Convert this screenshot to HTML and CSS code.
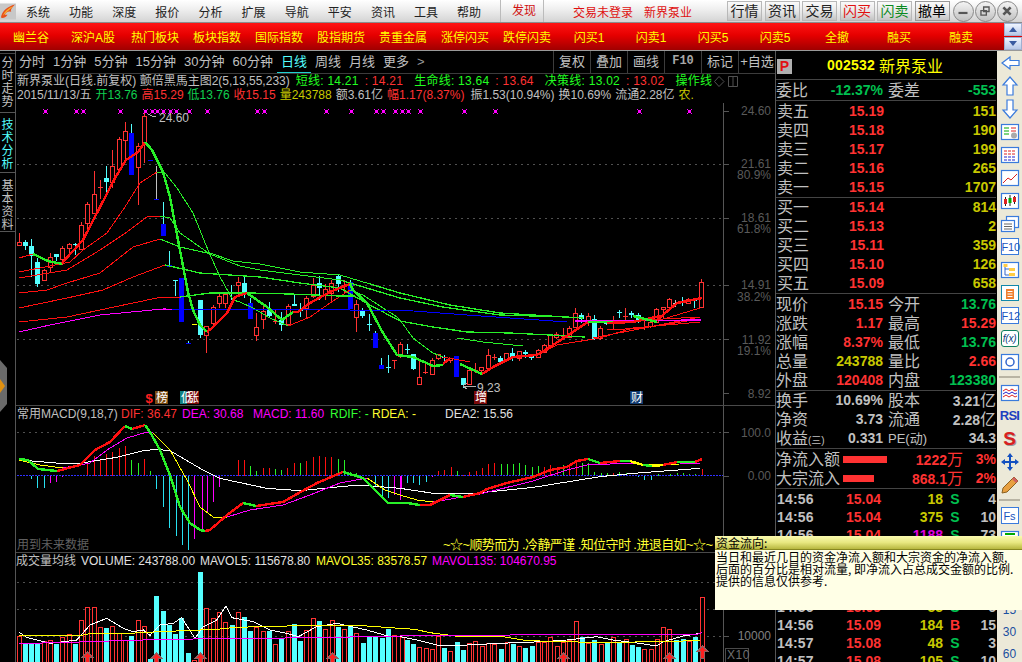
FILE: index.html
```html
<!DOCTYPE html>
<html lang="zh">
<head>
<meta charset="utf-8">
<title>新界泵业 日线</title>
<link rel="stylesheet" href="styles.css">
</head>
<body>
<div class="app">
  <header class="menubar">
    <svg class="logo" viewBox="0 0 17 17"><rect width="17" height="17" fill="#c8c8c8"/><path d="M1 15 C2 8 8 3 16 1 C12 5 11 7 12 9 C9 8 7 9 5 12 L8 12 C6 15 3 16 1 15Z" fill="#e8501a"/><path d="M3 13 C5 8 9 5 14 3 C10 7 7 9 3 13Z" fill="#f8b030"/></svg>
    <nav class="menu">
      <span>系统</span><span>功能</span><span>深度</span><span>报价</span><span>分析</span><span>扩展</span><span>导航</span><span>平安</span><span>资讯</span><span>工具</span><span>帮助</span>
    </nav>
    <span class="menu-find">发现</span>
    <span class="login">交易未登录</span>
    <span class="login name">新界泵业</span>
    <div class="quick">
      <span class="qbtn">行情</span><span class="qbtn">资讯</span><span class="qbtn">交易</span><span class="qbtn buy">闪买</span><span class="qbtn sell">闪卖</span><span class="qbtn cancel">撤单</span>
    </div>
    <div class="winctl">
      <span class="wbtn"><svg viewBox="0 0 20 20"><rect x="5" y="11" width="10" height="2.4" fill="#555"/></svg></span>
      <span class="wbtn"><svg viewBox="0 0 20 20"><path d="M8.500 5.500h6v5h-6zM5.500 9.500h6v5h-6z" fill="none" stroke="#555" stroke-width="1.500"/></svg></span>
      <span class="wbtn"><svg viewBox="0 0 20 20"><path d="M6 6l8 8M14 6l-8 8" stroke="#555" stroke-width="3"/></svg></span>
    </div>
  </header>

  <div class="redbar">
    <span>幽兰谷</span><span>深沪A股</span><span>热门板块</span><span>板块指数</span><span>国际指数</span><span>股指期货</span><span>贵重金属</span><span>涨停闪买</span><span>跌停闪卖</span><span>闪买1</span><span>闪卖1</span><span>闪买5</span><span>闪卖5</span><span>全撤</span><span>融买</span><span>融卖</span>
    <div class="scroll">
      <i class="up"></i><i class="down"></i>
    </div>
  </div>

  <div class="main">
    <aside class="sidetabs">
      <div class="stab first">分时走势</div>
      <div class="stab active">技术分析</div>
      <div class="stab last">基本资料</div>
    </aside>
    <svg class="handle" viewBox="0 0 8 52"><path d="M0 0L7 8V44L0 52Z" fill="#6a6a6a"/><path d="M0 19L5 26L0 33Z" fill="#e09010"/></svg>

    <section class="center">
      <div class="tabbar">
        <div class="periods">
          <span>分时</span><span>1分钟</span><span>5分钟</span><span>15分钟</span><span>30分钟</span><span>60分钟</span><span class="on">日线</span><span>周线</span><span>月线</span><span>更多</span><span class="more">&gt;</span>
        </div>
        <div class="tools-right">
          <span>复权</span><span>叠加</span><span>画线</span><span class="f10">F10</span><span>标记</span><span>+自选</span>
        </div>
      </div>
      <div class="info">
        <div class="line">
          <span class="g0">新界泵业(日线.前复权) 颤倍黑馬主图2(5,13,55,233)</span>
          <span class="lime m1">短线: 14.21</span><span class="red m2">: 14.21</span>
          <span class="lime m3">生命线: 13.64</span><span class="red m2">: 13.64</span>
          <span class="lime m3">决策线: 13.02</span><span class="red m2">: 13.02</span>
          <span class="lime m3">操作线</span>
          <svg class="mini" viewBox="0 0 26 11"><path d="M5 .5L10 5.500L5 10.500L.5 5.500Z M14.500 .5h9v10h-9zM19 .5v10" fill="none" stroke="#505050"/></svg>
        </div>
        <div class="line second">
          <span class="g0">2015/11/13/五</span>
          <span class="lime2">开13.76</span>
          <span class="red">高15.29</span>
          <span class="lime2">低13.76</span>
          <span class="red">收15.15</span>
          <span class="olive">量243788</span>
          <span class="g0">额3.61亿</span>
          <span class="red">幅1.17(8.37%)</span>
          <span class="g0 shift">振1.53(10.94%)</span>
          <span class="g0">换10.69%</span>
          <span class="g0">流通2.28亿</span>
          <span class="olive">农.</span>
        </div>
      </div>
      <svg class="chart" id="chart" viewBox="16 103 760 559" width="760" height="559">
        <g id="plot"></g>
        <text x="159" y="122" class="ct light">24.60</text>
        <text x="477" y="392" class="ct light">9.23</text>
        <g class="axis">
          <text x="771" y="115">24.60</text>
          <text x="771" y="168">21.61</text>
          <text x="771" y="179">80.9%</text>
          <text x="771" y="222">18.61</text>
          <text x="771" y="233">61.8%</text>
          <text x="771" y="289">14.91</text>
          <text x="771" y="301">38.2%</text>
          <text x="771" y="344">11.92</text>
          <text x="771" y="355">19.1%</text>
          <text x="771" y="398">8.92</text>
          <text x="771" y="437">100.0</text>
          <text x="771" y="480">0.00</text>
          <text x="771" y="640" class="brighter">10000</text>
        </g>
        <text x="727" y="659" class="xten">X10</text>
        <text x="149" y="403" class="badge-s">$</text>
        <text x="156" y="402" class="badge">榜</text>
        <text x="181" y="402" class="badge">低</text>
        <text x="187" y="402" class="badge">涨</text>
        <text x="475" y="402" class="badge">增</text>
        <text x="631" y="402" class="badge">财</text>
        <text x="17" y="418" class="ct light">常用MACD(9,18,7)</text>
        <text x="121" y="418" class="ct c-red">DIF: 36.47</text>
        <text x="182" y="418" class="ct c-mag">DEA: 30.68</text>
        <text x="253" y="418" class="ct c-mag">MACD: 11.60</text>
        <text x="330" y="418" class="ct c-green">RDIF: -</text>
        <text x="372" y="418" class="ct c-yellow">RDEA: -</text>
        <text x="445" y="418" class="ct c-white">DEA2: 15.56</text>
        <text x="17" y="549" class="ct dim">用到未来数据</text>
        <text x="443" y="549" class="ct c-yellow banner" textLength="270" lengthAdjust="spacing">~☆~顺势而为 .冷静严谨 .知位守时 .进退自如~☆~</text>
        <text x="16" y="565" class="ct light">成交量均线</text>
        <text x="81" y="565" class="ct c-white">VOLUME: 243788.00</text>
        <text x="200" y="565" class="ct c-white">MAVOL5: 115678.80</text>
        <text x="316" y="565" class="ct c-yellow">MAVOL35: 83578.57</text>
        <text x="432" y="565" class="ct c-mag">MAVOL135: 104670.95</text>
      </svg>
    </section>

    <section class="quote">
      <div class="q-head"><span class="pbadge">P</span><b class="code">002532</b><span class="qname">新界泵业</span></div>
      <div class="q-sec ratio">
        <div class="kv"><span>委比</span><b class="up-g">-12.37%</b><span>委差</span><b class="up-g">-553</b></div>
      </div>
      <div class="q-sec">
        <div class="book"><span>卖五</span><b class="r">15.19</b><b class="y">151</b></div>
        <div class="book"><span>卖四</span><b class="r">15.18</b><b class="y">190</b></div>
        <div class="book"><span>卖三</span><b class="r">15.17</b><b class="y">199</b></div>
        <div class="book"><span>卖二</span><b class="r">15.16</b><b class="y">265</b></div>
        <div class="book"><span>卖一</span><b class="r">15.15</b><b class="y">1707</b></div>
      </div>
      <div class="q-sec">
        <div class="book"><span>买一</span><b class="r">15.14</b><b class="y">814</b></div>
        <div class="book"><span>买二</span><b class="r">15.13</b><b class="y">2</b></div>
        <div class="book"><span>买三</span><b class="r">15.11</b><b class="y">359</b></div>
        <div class="book"><span>买四</span><b class="r">15.10</b><b class="y">126</b></div>
        <div class="book"><span>买五</span><b class="r">15.09</b><b class="y">658</b></div>
      </div>
      <div class="q-sec">
        <div class="kv"><span>现价</span><b class="r">15.15</b><span>今开</span><b class="up-g">13.76</b></div>
        <div class="kv"><span>涨跌</span><b class="r">1.17</b><span>最高</span><b class="r">15.29</b></div>
        <div class="kv"><span>涨幅</span><b class="r">8.37%</b><span>最低</span><b class="up-g">13.76</b></div>
        <div class="kv"><span>总量</span><b class="y">243788</b><span>量比</span><b class="r">2.66</b></div>
        <div class="kv"><span>外盘</span><b class="r">120408</b><span>内盘</span><b class="up-g">123380</b></div>
      </div>
      <div class="q-sec">
        <div class="kv"><span>换手</span><b class="w">10.69%</b><span>股本</span><b class="w">3.21<em>亿</em></b></div>
        <div class="kv"><span>净资</span><b class="w">3.73</b><span>流通</span><b class="w">2.28<em>亿</em></b></div>
        <div class="kv"><span class="over">收益<small class="tiny">(三)</small></span><b class="w">0.331</b><span class="pe">PE(动)</span><b class="w">34.3</b></div>
      </div>
      <div class="q-sec">
        <div class="flow"><span>净流入额</span><i class="fbar wide"></i><b class="r">1222<em>万</em></b><b class="r">3%</b></div>
        <div class="flow"><span>大宗流入</span><i class="fbar narrow"></i><b class="r">868.1<em>万</em></b><b class="r">2%</b></div>
      </div>
      <div class="q-sec trades">
        <div class="tr"><b class="w">14:56</b><b class="r">15.04</b><b class="y">18</b><b class="up-g">S</b><b class="w">4</b></div>
        <div class="tr"><b class="w">14:56</b><b class="r">15.04</b><b class="y">375</b><b class="up-g">S</b><b class="w">10</b></div>
        <div class="tr"><b class="w">14:56</b><b class="r">15.04</b><b class="m">1188</b><b class="up-g">S</b><b class="w">73</b></div>
        <div class="tr"></div>
        <div class="tr"></div>
        <div class="tr"></div>
        <div class="tr"><b class="w">14:56</b><b class="r">15.09</b><b class="y">55</b><b class="up-g">S</b><b class="w">6</b></div>
        <div class="tr"><b class="w">14:56</b><b class="r">15.09</b><b class="y">184</b><b class="r">B</b><b class="w">15</b></div>
        <div class="tr"><b class="w">14:57</b><b class="r">15.08</b><b class="y">48</b><b class="up-g">S</b><b class="w">3</b></div>
        <div class="tr"><b class="w">14:57</b><b class="r">15.08</b><b class="y">105</b><b class="up-g">S</b><b class="w">10</b></div>
      </div>
    </section>

    <aside class="toolcol">
      <svg class="ic" viewBox="0 0 20 20"><path d="M2 10L10 4V7.500H19V12.500H10V16Z" class="o"/></svg>
      <svg class="ic" viewBox="0 0 20 20"><path d="M10 1L17 9H13V19H7V9H3Z" class="o"/></svg>
      <svg class="ic" viewBox="0 0 20 20"><path d="M10 19L3 11H7V1H13V11H17Z" class="o"/></svg>
      <svg class="ic" viewBox="0 0 20 20"><rect x="1.500" y="2.500" width="17" height="15" class="o"/><path d="M4 6h5M4 9h5M4 12h5" stroke="#0a0"/><path d="M11 6h5M11 9h5" stroke="#d22"/><circle cx="14" cy="13.500" r="3" fill="#aaa"/></svg>
      <svg class="ic" viewBox="0 0 20 20"><rect x="1.500" y="2.500" width="17" height="15" class="o"/><path d="M4 6h12M4 9h12" stroke="#d22" stroke-dasharray="3 1"/><path d="M4 12h12M4 15h12" stroke="#22c" stroke-dasharray="3 1"/></svg>
      <svg class="ic" viewBox="0 0 20 20"><rect x="1.500" y="2.500" width="17" height="15" class="o"/><path d="M3 15L8 10L11 12L17 6" fill="none" stroke="#d22"/></svg>
      <svg class="ic" viewBox="0 0 20 20"><rect x="1.500" y="2.500" width="17" height="15" class="o"/><path d="M5.500 6v9M10 4v11M14.500 5v8" stroke="#222"/><rect x="4" y="8" width="3" height="5" fill="#d22"/><rect x="8.500" y="7" width="3" height="5" fill="#0a0"/><rect x="13" y="6" width="3" height="5" fill="#d22"/></svg>
      <svg class="ic" viewBox="0 0 20 20"><rect x="6.500" y="2.500" width="12" height="11" class="o"/><rect x="1.500" y="6.500" width="13" height="11" class="o"/><path d="M4 10h8M4 12.500h8M4 15h8" stroke="#666"/></svg>
      <span class="boxt">F10</span>
      <svg class="ic" viewBox="0 0 20 20"><rect x="1.500" y="2.500" width="17" height="15" class="o"/><path d="M5 5v10h4M5 9h4" fill="none" stroke="#36c"/><rect x="3.500" y="4" width="4" height="3" fill="#fc4"/><rect x="9" y="8" width="6" height="3" fill="#fc4"/><rect x="9" y="13" width="6" height="3" fill="#fc4"/></svg>
      <svg class="ic" viewBox="0 0 20 20"><rect x="1.500" y="2.500" width="17" height="15" fill="#fff" stroke="#18a"/><path d="M6 6h8v10H6z" fill="#f08030"/><path d="M7.500 8.500h5M7.500 11h5M7.500 13.500h5M10 4v2" stroke="#fff"/></svg>
      <span class="boxt">F12</span>
      <span class="boxt teal">f(x)</span>
      <svg class="ic" viewBox="0 0 20 20"><rect x="1.500" y="2.500" width="17" height="15" class="o"/><circle cx="10" cy="10" r="4" fill="none" stroke="#36c" stroke-width="1.500"/></svg>
      <hr class="sep">
      <svg class="ic" viewBox="0 0 20 20"><rect x="1.500" y="2.500" width="17" height="15" class="o"/><path d="M3 8l3-2 3 2 3-2 3 2 2-1" fill="none" stroke="#d22"/><path d="M3 11l3-2 3 2 3-2 3 2 2-1" fill="none" stroke="#22c"/><path d="M3 14l3-2 3 2 3-2 3 2 2-1" fill="none" stroke="#d22"/></svg>
      <span class="rsi">RSI</span>
      <span class="sic">S</span>
      <svg class="ic" viewBox="0 0 20 20"><path d="M10 1l3 4h-2v4h4V7l4 3-4 3v-2h-4v4h2l-3 4-3-4h2v-4H5v2l-4-3 4-3v2h4V5H7Z" fill="#1450c0"/></svg>
      <svg class="ic" viewBox="0 0 20 20"><path d="M14 2l4 4L7 17l-5 1 1-5Z" fill="#e8a040" stroke="#8a6020"/><path d="M14 2l4 4-2 2-4-4Z" fill="#d06060"/></svg>
      <hr class="sep">
      <span class="boxt narrow-t">Fs</span>
      <svg class="ic" viewBox="0 0 20 20"><rect x="1.500" y="2.500" width="17" height="15" class="o"/><path d="M5 5h10" stroke="#0a0" stroke-width="2"/></svg>
      <div class="nums"><span>15</span><span>30</span><span>60</span></div>
    </aside>

    <div class="tip">
      <div class="tip-h">资金流向:</div>
      <div class="tip-b">当日和最近几日的资金净流入额和大宗资金的净流入额,<br>后面的百分比是相对流量, 即净流入占总成交金额的比例.<br>提供的信息仅供参考.</div>
    </div>
  </div>
</div>
<script src="chart.js"></script>
</body>
</html>
```
FILE: styles.css
```css
* { box-sizing: border-box; }
html, body { margin: 0; padding: 0; background: #000; }
body { width: 1022px; height: 662px; overflow: hidden; font-family: "Liberation Sans", "Noto Sans CJK SC", sans-serif; font-size: 12px; }
.app { width: 1022px; height: 662px; display: flex; flex-direction: column; }

.menubar { height: 23px; flex: none; display: flex; align-items: center; background: linear-gradient(#ffffff, #f0f0f0 40%, #d4d4d4); border-bottom: 1px solid #8c8c8c; color: #222; font-size: 12px; position: relative; white-space: nowrap; }
.menubar > * { flex: none; }
.logo { width: 16px; height: 17px; }
.menu { display: flex; gap: 19.100px; margin-left: 10px; width: 474px; }
.menu-find { color: #d01010; width: 44px; height: 22px; line-height: 22px; padding-left: 11px; border-left: 1px solid #bbb; border-right: 1px solid #bbb; }
.login { color: #e01010; margin-left: 29px; }
.login.name { margin-left: 11px; }
.quick { display: flex; gap: 2.500px; margin-left: 35px; }
.qbtn { width: 35px; height: 20px; line-height: 18px; text-align: center; font-size: 14px; border: 1px solid #b8b8b8; background: linear-gradient(#fafafa, #e8e8e8 50%, #c4c4c4); color: #222; }
.qbtn.buy { color: #e01010; }
.qbtn.sell { color: #0a8a20; }
.qbtn.cancel { color: #000; border-color: #999; }
.winctl { display: flex; gap: 1px; margin-left: 3px; }
.wbtn { width: 21px; height: 21px; border-radius: 50%; border: 1.500px solid #888; background: linear-gradient(#f4f4f4, #c0c0c0); display: block; }
.wbtn svg { display: block; width: 18px; height: 18px; }

.redbar { height: 28px; flex: none; display: flex; align-items: center; position: relative; background: linear-gradient(#ff1414, #e60000 45%, #a00000); border-bottom: 1px solid #999; color: #ffff00; }
.redbar > span { width: 62px; text-align: center; flex: none; font-size: 12px; }
.scroll { margin-left: 12px; width: 18px; display: flex; flex-direction: column; gap: 1px; }
.scroll i { display: block; height: 13px; background: linear-gradient(#eef4ff, #b8c8e8); border: 1px solid #a0b0d0; position: relative; }
.scroll i::after { content: ""; position: absolute; left: 4px; width: 0; height: 0; border-left: 4px solid transparent; border-right: 4px solid transparent; }
.scroll .up::after { top: 3px; border-bottom: 5px solid #3a5aa0; }
.scroll .down::after { top: 3px; border-top: 5px solid #3a5aa0; }

.main { flex: 1; display: flex; position: relative; min-height: 0; }

.sidetabs { width: 16px; flex: none; border-right: 1px solid #555; display: flex; flex-direction: column; }
.stab { writing-mode: vertical-rl; text-orientation: upright; font-family: "Noto Sans CJK SC", sans-serif; font-size: 12px; letter-spacing: 1px; line-height: 15px; color: #c0c0c0; width: 15px; white-space: nowrap; flex: none; }
.stab.first { margin-top: 2px; height: 60px; border-top: 1px solid #444; border-bottom: 1px solid #555; padding-top: 2px; }
.stab.active { color: #54ffff; margin-top: 5px; height: 54px; }
.stab.last { margin-top: 0; height: 60px; padding-top: 6px; border-top: 1px solid #555; border-bottom: 1px solid #555; }
.handle { position: absolute; left: 0; top: 309px; width: 8px; height: 52px; }

.center { width: 760px; flex: none; display: flex; flex-direction: column; border-right: 1px solid #555; }
.tabbar { height: 23px; flex: none; display: flex; justify-content: space-between; border-bottom: 1px solid #3c3c3c; color: #c0c0c0; font-size: 13px; }
.periods { display: flex; gap: 8px; padding-left: 3px; line-height: 21px; }
.periods span { white-space: nowrap; }
.periods .on { color: #54ffff; border-bottom: 1px solid #20d0d0; padding: 0 4px; margin: 0 -4px; height: 22px; }
.periods .more { font-family: "Liberation Sans", sans-serif; color: #999; }
.tools-right { display: flex; }
.tools-right span { width: 37px; text-align: center; border-left: 1px solid #3c3c3c; line-height: 21px; white-space: nowrap; }
.tools-right .f10 { font-family: "Liberation Mono", monospace; font-size: 12px; font-weight: bold; color: #a8a8a8; }

.info { height: 29px; flex: none; padding-left: 1px; font-size: 12px; }
.line { height: 14px; line-height: 14px; white-space: nowrap; display: flex; align-items: center; }
.line .lime, .line .red { letter-spacing: .25px; }
.line.second { gap: 4px; }
.line.second span { letter-spacing: 0; }
.shift { margin-left: 2px; }
.g0 { color: #c0c0c0; }
.lime { color: #20ff20; }
.lime2 { color: #10d050; }
.red { color: #ff3232; }
.olive { color: #c8c800; }
.m1 { margin-left: 6px; }
.m2 { margin-left: 6px; }
.m3 { margin-left: 11px; }
.mini { width: 26px; height: 11px; margin-left: 2px; flex: none; }
.chart { display: block; flex: none; }

.ct { font-size: 12px; font-family: "Liberation Sans", "Noto Sans CJK SC", sans-serif; }
.light { fill: #c0c0c0; }
.dim { fill: #606060; }
.c-red { fill: #ff3232; }
.c-mag { fill: #ff00ff; }
.c-green { fill: #32ff32; }
.c-yellow { fill: #ffff32; }
.c-white { fill: #e0e0e0; }
.banner { font-size: 13px; }
.axis text { font-size: 12px; fill: #5a5a5a; text-anchor: end; }
.axis .brighter { fill: #808080; }
.xten { font-size: 12px; fill: #707070; letter-spacing: .5px; }
.badge { font-size: 12px; fill: #fff; font-family: "Noto Sans CJK SC", sans-serif; }
.badge-s { font-size: 13px; font-weight: bold; fill: #ff2020; text-anchor: middle; }

.candle-r { fill: #000; stroke: #ff3232; }
.wick-r { stroke: #ff3232; fill: none; }
.wick-c { stroke: #54ffff; fill: none; }
.wick-g { stroke: #c0c0c0; fill: none; }
.candle-c { fill: #54ffff; }
.candle-b { fill: #0000ff; }
.chart path, .chart rect, .chart polyline, .chart line { shape-rendering: crispEdges; }
.l { fill: none; stroke-width: 1; }
.l3 { fill: none; stroke-width: 2.400; }
.l2 { fill: none; stroke-width: 1.300; }
.s-red { stroke: #ff1010; }
.s-green { stroke: #28f028; }
.s-blue { stroke: #0000ff; }
.s-mag { stroke: #ff00ff; }
.s-yel { stroke: #ffff00; }
.s-white { stroke: #ffffff; }
.s-cyan { stroke: #28e0f0; }
.dots { stroke: #505050; stroke-dasharray: 2 4; fill: none; }
.frame { stroke: #4a4a4a; fill: none; }
.axisline { stroke: #555; fill: none; }
.zero { stroke: #3030ff; stroke-dasharray: 2 1; fill: none; }
.mark { fill: #ff00ff; }
.ptr { stroke: #b0b0b0; fill: none; }
.b-brown { fill: #7a4a10; }
.b-teal { fill: #108080; }
.b-dred { fill: #7a0a0a; }
.b-navy { fill: #103a70; }
.arrow { fill: #ff2020; stroke: #906060; }

.quote { width: 221px; flex: none; display: flex; flex-direction: column; color: #c0c0c0; font-size: 16px; padding-right: 1px; }
.q-head { height: 28px; flex: none; display: flex; align-items: center; padding-left: 1px; }
.pbadge { width: 15px; height: 15px; background: #b0b0b0; color: #e01010; font-weight: bold; font-size: 14px; line-height: 15px; text-align: center; margin-top: 3px; }
.code { color: #ffff00; font-size: 14px; letter-spacing: .2px; margin-left: 35px; }
.qname { color: #ffff00; font-size: 16px; margin-left: 4px; }
.q-sec { border-top: 1px solid #444; flex: none; padding-top: .5px; }
.q-sec b { font-size: 14px; font-weight: bold; }
.q-sec em { font-style: normal; font-weight: normal; font-size: 16px; }
.ratio { height: 21px; }
.book { height: 19px; line-height: 19px; display: grid; grid-template-columns: 36px 71px 1fr; padding-left: 1px; }
.book b { text-align: right; }
.kv { height: 19px; line-height: 19px; display: grid; grid-template-columns: 36px 71px 36px 1fr; white-space: nowrap; }
.kv > span:nth-child(3) { padding-left: 5px; }
.kv b { text-align: right; }
.kv > span { min-width: 0; }
.tiny { font-size: 10px; }
.pe { font-size: 13px; }
.flow { height: 19px; line-height: 19px; display: grid; grid-template-columns: 67px 48px 72px 1fr; white-space: nowrap; align-items: center; }
.flow b { text-align: right; }
.fbar { height: 7px; display: block; background: #ff3232; }
.fbar.wide { width: 44px; }
.fbar.narrow { width: 31px; }
.trades { padding-top: 1px; }
.tr { height: 18px; line-height: 18px; display: grid; grid-template-columns: 42px 62px 62px 24px 1fr; padding-left: 1px; }
.tr b { text-align: right; }
.tr b:first-child { text-align: left; letter-spacing: .2px; }
.tr b:nth-child(4) { text-align: center; }
.r { color: #ff3232; }
.y { color: #c8c800; }
.m { color: #e000e0; }
.w { color: #c0c0c0; }
.up-g { color: #00c050; }

.toolcol { width: 25px; flex: none; background: #ece9d8; display: flex; flex-direction: column; align-items: center; padding-top: 2px; }
.toolcol > .ic, .toolcol > .boxt, .toolcol > .rsi, .toolcol > .sic { height: 20px; margin-bottom: 3px; flex: none; }
.ic { width: 20px; display: block; }
.ic .o { fill: #fff; stroke: #3a7bdc; stroke-width: 1.200; }
.boxt { width: 18px; border: 1px solid #3a7bdc; background: #fff; color: #1a55c0; font-size: 11px; line-height: 16px; height: 17px !important; margin-top: 1px; margin-bottom: 5px !important; text-align: center; letter-spacing: -.2px; }
.boxt.teal { border-color: #108060; color: #104080; border-radius: 3px; font-style: italic; font-size: 10px; }
.sep { width: 21px; height: 2px; margin: 1px 0 5px; border: 0; background: #b8b4a4; flex: none; }
.rsi { font-size: 13px; font-weight: bold; color: #2040c0; line-height: 20px; letter-spacing: -.8px; }
.sic { font-size: 19px; font-weight: bold; color: #d82020; line-height: 20px; text-shadow: 1px 1px 0 #999; }
.nums { margin-top: 47px; display: flex; flex-direction: column; align-items: center; color: #1a4fa0; font-size: 12px; line-height: 22px; }

.tip { position: absolute; left: 715px; top: 485px; width: 307px; height: 74px; background: #ffffe6; color: #000; font-size: 12px; line-height: 12px; font-family: "Noto Sans CJK SC", sans-serif; z-index: 5; }
.tip-h { height: 14px; background: linear-gradient(#fafab0, #e8e880 50%, #b8b840); border-bottom: 1px solid #888820; padding-left: 1px; line-height: 13px; }
.tip-b { padding: 1px 0 0 1px; white-space: nowrap; }
```
FILE: chart.js
```js
(function () {
  var out = [];
  function seg(cls, pts) {
    out.push('<polyline class="' + cls + '" points="' + pts.join(',') + '"/>');
  }
  function z(ox, oy, arr) {
    var r = [];
    for (var i = 0; i < arr.length; i += 2) { r.push(ox + arr[i] / 3, oy + arr[i + 1] / 3); }
    return r;
  }

  // Reference grid
  [164, 218, 285, 339, 432, 582, 609, 636].forEach(function (y) {
    out.push('<path class="dots" d="M17 ' + (y + .5) + 'H723"/>');
  });
  [111, 164, 218, 285, 339, 393, 432, 476, 636].forEach(function (y) {
    out.push('<path class="axisline" d="M723 ' + (y + .5) + 'H729"/>');
  });
  out.push('<path class="axisline" d="M723.500 103V662"/>');
  out.push('<path class="frame" d="M16 405.500H776M16 552.500H776"/>');
  out.push('<path class="frame" d="M725.500 662V648.500H748.500V662"/>');

  // Candles: x, type, top, bottom, high, low
  var C = [
    [19,'r',242,245,233,245],[25,'c',242,246,240,250],[31,'c',246,256,239,277],[37,'c',262,284,258,287],
    [44,'r',270,280,269,280],[50,'r',257,267,253,272],[56,'c',254,257,254,261],[62,'r',248,259,246,265],
    [69,'r',244,248,243,255],[75,'x',244,245,243,255,'c'],[81,'r',225,249,222,249],[87,'r',204,223,202,232],
    [94,'r',194,213,171,213],[100,'x',187,188,180,199,'r'],[106,'c',178,182,166,197],[112,'r',166,182,150,188],
    [119,'r',139,169,137,169],[125,'r',131,140,122,160],[131,'b',133,175,124,175],[138,'r',146,167,143,205],
    [144,'r',116,144,112,163],[150,'bd',160,161,160,161],[156,'bd',199,200,166,200,'g'],[163,'b',224,236,202,236],
    [169,'b',265,267,251,267],[175,'x',280,281,280,296,'c'],[181,'b',278,322,278,322],[188,'bd',343,344,341,344],
    [200,'c',300,335,300,338],[206,'r',326,335,326,353],[213,'r',307,323,305,327],[219,'r',296,303,292,308],
    [225,'r',294,303,292,308],[231,'x',292,293,285,300,'c'],[238,'r',282,285,277,296],[244,'c',283,292,277,298],
    [250,'b',303,319,298,319],[256,'r',327,335,313,341],[263,'r',311,319,304,329],[269,'c',310,316,302,318],
    [275,'x',321,322,310,324,'r'],[281,'c',320,325,312,331],[288,'r',306,324,304,325],[294,'c',304,306,295,306],
    [300,'x',310,311,303,317,'c'],[306,'r',298,308,296,318],[313,'r',285,296,278,298],[319,'c',283,288,276,300],
    [325,'r',289,294,284,300],[331,'r',283,293,280,301],[338,'c',276,284,274,292],[344,'x',285,286,280,294,'r'],
    [350,'b',282,309,280,309],[356,'r',304,317,300,332],[362,'c',310,316,308,318],[369,'x',324,325,314,331,'c'],
    [375,'b',333,348,331,348],[381,'b',365,369,358,369],[388,'x',367,368,355,373,'c'],[394,'x',360,361,360,369,'r'],
    [400,'r',344,356,342,358],[407,'x',349,350,344,354,'c'],[413,'c',354,369,354,370],[419,'r',377,384,360,385],
    [425,'x',372,373,361,374,'r'],[432,'r',360,374,358,375],[438,'r',354,358,354,360],[444,'x',357,358,355,362,'c'],
    [450,'r',358,360,358,363],[456,'b',356,377,356,377],[463,'c',378,385,378,388],[469,'r',370,384,370,385],
    [475,'x',370,371,363,373,'r'],[481,'r',367,370,367,372],[488,'r',355,368,349,369],[494,'x',357,358,354,360,'r'],
    [500,'c',358,362,356,363],[506,'r',353,360,353,362],[512,'c',353,357,348,361],[519,'r',351,358,351,361],
    [525,'c',352,354,350,358],[531,'c',356,358,355,360],[538,'r',350,357,349,358],[544,'r',345,352,344,352],
    [550,'r',335,345,334,347],[556,'r',334,337,332,339],[563,'x',336,337,328,340,'r'],[569,'r',328,337,326,338],
    [575,'r',313,327,308,328],[581,'c',315,319,313,323],[588,'r',316,320,313,326],[594,'c',319,339,315,340],
    [600,'r',328,338,326,340],[606,'c',322,324,320,325],[613,'r',320,323,316,329],[619,'x',312,313,310,318,'c'],
    [625,'x',316,317,308,322,'r'],[631,'c',313,315,311,318],[638,'c',315,321,313,323],[644,'x',327,328,320,330,'r'],
    [650,'r',322,326,320,328],[656,'r',309,322,308,323],[663,'r',307,309,307,318],[669,'r',299,307,298,309],
    [675,'x',303,304,300,307,'g'],[682,'x',302,303,297,306,'c'],[688,'r',299,303,298,304],[694,'x',300,301,298,308,'c'],
    [701,'r',282,307,279,308]
  ];
  C.forEach(function (c) {
    var x = c[0], t = c[1], top = c[2], bot = c[3], hi = c[4], lo = c[5], col = c[6];
    var w = x + .5;
    if (t === 'r') {
      if (hi < top) out.push('<path class="wick-r" d="M' + w + ' ' + hi + 'V' + top + '"/>');
      if (lo > bot) out.push('<path class="wick-r" d="M' + w + ' ' + bot + 'V' + lo + '"/>');
      out.push('<rect class="candle-r" x="' + (x - 1.5) + '" y="' + (top + .5) + '" width="4" height="' + (bot - top) + '"/>');
    } else if (t === 'c' || t === 'b') {
      out.push('<path class="wick-c" d="M' + w + ' ' + hi + 'V' + lo + '"/>');
      out.push('<rect class="candle-' + t + '" x="' + (x - 2) + '" y="' + top + '" width="5" height="' + (bot - top) + '"/>');
    } else if (t === 'x') {
      out.push('<path class="wick-' + col + '" d="M' + w + ' ' + hi + 'V' + lo + 'M' + (x - 2) + ' ' + (top + .5) + 'H' + (x + 3) + '"/>');
    } else if (t === 'bd') {
      if (col === 'g') out.push('<path class="wick-g" d="M' + w + ' ' + hi + 'V' + lo + '"/>');
      else if (lo - hi > 1) out.push('<path class="wick-c" d="M' + w + ' ' + hi + 'V' + lo + '"/>');
      out.push('<rect class="candle-b" x="' + (x - 2) + '" y="' + (lo - 1) + '" width="5" height="1"/>');
    }
  });
  out.push('<path class="s-yel l" d="M192 324.500H197"/>');

  // Moving averages in the main pane
  seg('l s-red', [19,258,33,254]);
  seg('l s-red', [19,272,50,266,70,262,83,250,107,233,125,207,140,183,157,172]);
  seg('l s-green', [157,172,165,173,177,188,193,213,208,250,220,277,233,300,240,302,253,308,270,318,288,326]);
  seg('l s-red', [288,326,310,317,330,303,350,290]);
  seg('l s-green', [350,290,363,295,397,317,400,320,413,338,433,353,443,357]);
  seg('l s-red', [443,357,470,362]);
  seg('l s-red', [19,278,67,270,100,250,127,232,147,217,160,216]);
  seg('l s-green', [160,216,170,218,180,233,207,252,233,261,260,264,300,272,340,275,370,284]);
  seg('l2 s-green', [370,284,400,293,450,305,500,313,583,318]);
  seg('l s-red', [19,293,47,290,67,283,100,273,133,247,160,239]);
  seg('l s-green', [160,239,180,247,207,253,240,266,260,270,300,275,340,280]);
  seg('l2 s-green', [340,280,400,298,443,307,500,315,567,317]);
  seg('l s-red', [19,308,67,298,103,290,133,277,165,265]);
  seg('l2 s-green', [165,265,200,273,260,277,300,283,340,288,370,305,400,321,433,327,467,332,510,333,550,335,585,337]);
  seg('l s-red', [19,322,67,317,133,303,157,298,180,297]);
  seg('l2 s-green', [180,297,210,293,250,293,290,294,340,296,355,296]);
  seg('l s-mag', [19,332,50,325,100,315,163,309,340,310]);
  seg('l s-blue', [172,309,350,310,400,310,467,315,567,322]);
  seg('l s-green', [457,338,483,342,523,346]);
  seg('l s-red', [538,355,557,345,600,338,633,328,700,322]);
  seg('l s-red', [593,338,700,317]);
  seg('l s-red', [607,330,643,328,700,319]);
  seg('l s-red', [660,320,700,308]);
  seg('l s-red', [607,322,700,317]);
  seg('l2 s-mag', [575,321,701,320]);

  // Heavy trend line
  var H = [
    ['s-green', [33,254,48,261,62,264]],
    ['s-red', [62,263,83,240,100,207,115,178,126,160,138,152,145,142]],
    ['s-green', [145,142,152,150,163,172,170,197,178,240,188,292,193,310,200,325,207,332]],
    ['s-red', [207,332,213,327,227,313,235,297,247,293]],
    ['s-green', [247,293,267,307,282,320,293,312]],
    ['s-red', [293,312,298,312,310,303,330,292,350,284]],
    ['s-green', [350,284,353,290,367,303,383,333,397,355,413,357,433,366,443,365]],
    ['s-red', [443,364,450,358]],
    ['s-green', [460,364,482,374]],
    ['s-red', [482,374,493,367,513,357,537,355,550,347,588,322]],
    ['s-green', [588,322,613,322]],
    ['s-red', [607,323,633,322,660,316]],
    ['s-green', [633,316,657,322]],
    ['s-red', [657,320,677,303,702,298]]
  ];
  H.forEach(function (h) { seg('l3 ' + h[0], h[1]); });

  // Marks along the top
  [45,76,83,120,145,152,157,163,170,176,189,207,257,264,326,351,376,383,395,402,408,420,464,495,639,689].forEach(function (x) {
    out.push('<path class="mark" d="M' + (x - 2) + ' 109h1v1h-1zM' + (x + 2) + ' 109h1v1h-1zM' + (x - 2) + ' 113h1v1h-1zM' + (x + 2) + ' 113h1v1h-1zM' + (x - 1) + ' 110h3v3h-3z"/>');
  });

  // Price pointers and event badges
  out.push('<path class="ptr" d="M148 114L152 116H156"/>');
  out.push('<path class="ptr" d="M463 386L467 383M463 386L467 389M463 386H476"/>');
  out.push('<rect class="b-brown" x="155" y="391" width="13" height="13"/>');
  out.push('<rect class="b-teal" x="180" y="391" width="7" height="13"/>');
  out.push('<rect class="b-dred" x="187" y="391" width="12" height="13"/>');
  out.push('<rect class="b-dred" x="474" y="391" width="13" height="13"/>');
  out.push('<rect class="b-navy" x="630" y="391" width="13" height="13"/>');

  // MACD histogram
  var base = 476;
  function macd(ox, oy, cls, arr) {
    for (var i = 0; i < arr.length; i += 2) {
      var x = Math.round(ox + arr[i] / 3) + .5, y = oy + arr[i + 1] / 3;
      out.push('<path class="l ' + cls + '" d="M' + x + ' ' + base + 'V' + Math.round(y) + '"/>');
    }
  }
  macd(0, 400, 's-red', [262,185,282,168,300,176,318,162,337,155,358,143,376,138,433,177,715,180,733,180,790,204,808,204,862,204,882,190,918,182,940,170,958,168,976,170,994,170]);
  macd(0, 400, 's-green', [394,180,415,188,451,212,751,197,769,212,826,207,844,210,900,190,1014,178,1032,180,1050,215,1069,220]);
  macd(0, 400, 's-cyan', [94,236,112,263,132,263,469,267,490,320,508,385,527,408,545,435,565,450,1126,262,1147,290,1165,295]);
  macd(0, 400, 's-mag', [151,250,169,246,187,232,583,417,605,390,620,335,640,305,658,262,1183,285,1200,300]);
  macd(400, 410, 's-mag', [3,235,95,200]);
  macd(400, 410, 's-cyan', [22,218,40,220,58,225,77,215,715,200,733,210,754,210]);
  macd(400, 410, 's-red', [115,183,133,180,152,170,190,195,208,185,227,182,246,175,265,162,283,159,433,170,451,165,470,172,508,170,527,150,640,188,905,178]);
  macd(400, 410, 's-green', [172,183,302,162,320,162,340,162,358,160,376,165,396,172,415,168,490,165,546,158,564,160,583,187,602,190,621,190,658,185,677,190,696,195,773,193,810,192,830,190,848,190,868,192,885,192]);
  out.push('<path class="zero" d="M17 475.500H723"/>');

  // MACD lines
  seg('l s-white', z(0, 400, [58,180,180,190,240,190,350,172,430,152,470,148,510,152,600,205,660,235,800,265,900,272,1000,262,1080,255,1200,265]));
  seg('l s-white', z(400, 410, [0,235,100,250,220,250,400,232,600,200,700,190,900,175]));
  seg('l s-yel', [19,460,40,465,55,467,65,468]);
  seg('l s-mag', [63,468,90,463,110,448,127,438,147,432,153,433]);
  seg('l s-yel', [153,433,170,450,187,480,200,507,213,517,227,517]);
  seg('l s-mag', [227,517,250,510,283,505,310,495,340,483,367,478]);
  seg('l s-yel', [367,478,385,490,400,495,417,500,433,502]);
  seg('l s-mag', [433,502,480,494,533,481,567,470,587,465,633,463]);
  seg('l s-yel', [633,463,643,465,680,464]);
  seg('l s-mag', [680,464,700,463]);
  var D = [
    ['s-green', [19,459,28,460,38,469,57,471]],
    ['s-red', [57,471,80,465,95,450,110,442,125,426]],
    ['s-green', [125,426,132,429]],
    ['s-red', [132,429,145,425]],
    ['s-green', [145,425,150,432,160,450,170,475,180,507,190,523,200,530,205,531]],
    ['s-red', [205,531,210,530,227,515,243,503]],
    ['s-green', [243,503,256,506]],
    ['s-red', [256,506,283,502,297,494,317,483,343,472]],
    ['s-green', [343,472,363,478,377,492,388,503,407,503,420,505]],
    ['s-red', [420,505,430,505,450,495]],
    ['s-green', [450,495,463,497]],
    ['s-red', [463,497,480,493,487,489,507,483,533,477,550,470,567,467,577,461,588,459]],
    ['s-green', [588,459,600,463]],
    ['s-red', [600,463,620,461]],
    ['s-green', [620,461,630,461]],
    ['s-yel', [630,461,643,465]],
    ['s-green', [643,465,652,466]],
    ['s-yel', [652,466,663,465]],
    ['s-red', [663,465,677,462]],
    ['s-green', [677,462,695,462]],
    ['s-red', [695,462,702,459]]
  ];
  D.forEach(function (h) { seg('l3 ' + h[0], h[1]); });

  // Volume bars
  function vol(ox, oy, arr) {
    for (var i = 0; i < arr.length; i += 3) {
      var x = Math.round(ox + arr[i] / 3), y = Math.round(oy + arr[i + 2] / 3);
      if (arr[i + 1] === 'r') out.push('<rect class="candle-r" x="' + (x - 1.5) + '" y="' + (y + .5) + '" width="4" height="' + (670 - y) + '"/>');
      else out.push('<rect class="candle-c" x="' + (x - 2) + '" y="' + y + '" width="5" height="' + (670 - y) + '"/>');
    }
  }
  vol(0, 530, [58,'r',318,76,'c',343,94,'c',343,112,'c',338,132,'r',333,151,'r',330,169,'c',342,187,'r',320,208,'r',313,226,'c',342,244,'r',270,262,'r',232,283,'r',232,301,'r',292,319,'c',293,337,'r',288,358,'r',308,376,'r',330,394,'c',318,415,'r',270,433,'r',288,451,'c',387,469,'c',198,490,'c',243,508,'c',285,526,'c',312,544,'c',263,565,'c',368,583,'r',390,601,'c',126,619,'r',235,640,'r',265,658,'r',247,676,'r',277,695,'c',285,715,'r',247,733,'c',262,751,'c',303,769,'r',290,790,'r',303,808,'c',303,826,'r',342,844,'c',327,865,'r',303,883,'c',282,901,'c',333,919,'r',300,940,'r',265,958,'c',273,976,'r',297,995,'r',270,1014,'c',290,1032,'r',297,1051,'c',285,1069,'r',310,1090,'c',338,1107,'c',322,1126,'c',322,1147,'c',325,1165,'c',297,1183,'r',315]);
  vol(400, 410, [5,'r',680,22,'c',690,40,'c',702,58,'r',710,77,'r',715,97,'r',717,115,'r',677,133,'c',713,151,'r',723,172,'c',697,190,'c',720,208,'r',700,226,'r',693,246,'r',707,265,'r',700,283,'r',703,302,'c',717,320,'r',697,340,'c',703,358,'r',708,376,'c',713,396,'c',707,415,'r',697,433,'r',697,451,'r',682,470,'r',708,489,'r',695,508,'r',690,527,'r',634,546,'c',680,564,'r',700,583,'c',690,602,'r',702,621,'c',700,640,'r',682,658,'c',695,677,'r',687,696,'c',705,715,'c',711,733,'r',717,754,'r',717,772,'r',687,790,'r',652,808,'r',658,828,'c',690,848,'c',687,868,'r',692,885,'c',680,905,'r',562]);

  // Volume moving averages
  seg('l s-white', z(0, 530, [58,307,80,322,150,340,230,330,270,285,320,265,370,295,400,305,430,300,450,316,480,285,520,280,545,263,585,325,610,290,650,270,678,228,695,263,760,275,810,300,860,310,895,320,950,290,1010,280,1100,300,1170,320,1200,320]));
  seg('l s-white', z(400, 410, [0,680,50,690,110,705,200,705,300,700,430,695,500,690,590,680,640,690,720,700,770,708,790,695,850,678,900,670]));
  seg('l s-yel', z(0, 530, [58,316,245,316,275,310,370,311,480,305,600,300,660,297,705,292,900,287,1100,288,1200,295]));
  seg('l s-yel', z(400, 410, [0,655,45,658,90,668,180,680,310,680,380,692,610,698,900,692]));
  seg('l s-mag', z(0, 530, [58,340,200,338,275,334,380,332,480,328,580,327,720,325,1000,323,1100,319,1200,319]));
  seg('l s-mag', z(400, 410, [0,677,330,675,640,673,890,673,905,668]));

  // Volume arrows
  [[87,652],[156,653],[200,653],[332,653],[563,653],[669,653],[702,646]].forEach(function (a) {
    var x = a[0] + .5, y = a[1];
    out.push('<path class="arrow" d="M' + x + ' ' + y + 'L' + (x + 5) + ' ' + (y + 5) + 'H' + (x + 2) + 'V' + (y + 12) + 'H' + (x - 2) + 'V' + (y + 5) + 'H' + (x - 5) + 'Z"/>');
  });

  document.getElementById('plot').innerHTML = out.join('');
})();
```
